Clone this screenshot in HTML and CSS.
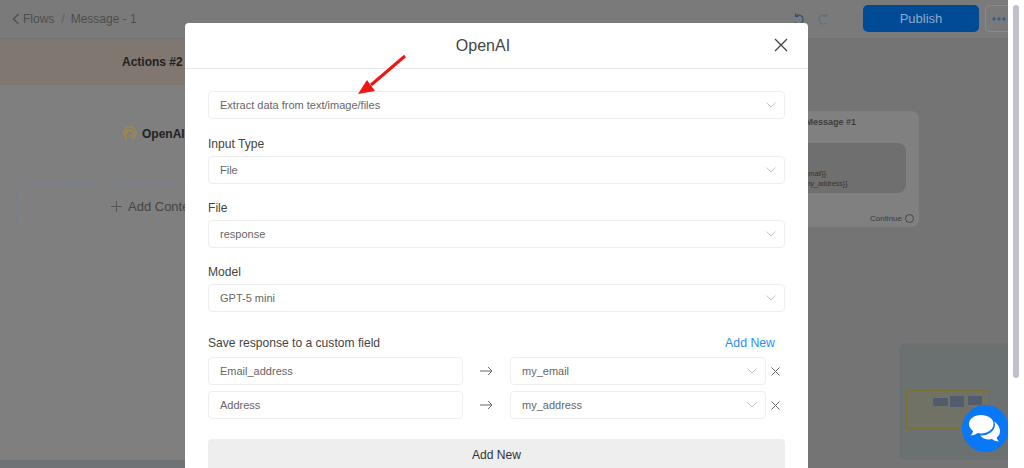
FILE: index.html
```html
<!DOCTYPE html>
<html lang="en">
<head>
    <meta charset="UTF-8">
    <title>OpenAI - Message 1</title>
    <link rel="stylesheet" href="styles.css">
</head>
<body>
    <div class="page">
        <div class="topbar">
            <div class="crumbs">
                <svg class="back" width="8" height="12" viewBox="0 0 8 12"><path d="M6.500 1 1.500 6l5 5" fill="none" stroke="currentColor" stroke-width="1.300"/></svg>
                <span>Flows</span><span class="sep">/</span><span>Message - 1</span>
            </div>
            <div class="top-actions">
                <svg class="undo" width="12" height="12" viewBox="0 0 14 14"><path d="M3 3.800a5.200 5.200 0 1 1-.5 7M3 .5v3.500h3.500" fill="none" stroke="#2a5480" stroke-width="1.400"/></svg>
                <svg class="redo" width="12" height="12" viewBox="0 0 14 14"><path d="M11 3.800a5.200 5.200 0 1 0 .5 7M11 .5v3.500H7.500" fill="none" stroke="#5f6f7c" stroke-width="1.400"/></svg>
                <div class="publish">Publish</div>
                <div class="more">
                    <svg width="14" height="4" viewBox="0 0 14 4"><circle cx="2" cy="2" r="1.700"/><circle cx="7" cy="2" r="1.700"/><circle cx="12" cy="2" r="1.700"/></svg>
                </div>
            </div>
        </div>

        <div class="canvas">
            <div class="actions-node">
                <div class="actions-head">Actions #2</div>
                <div class="openai-row">
                    <svg width="14" height="15" viewBox="0 0 14 15"><path d="M3.500 14V11.500C1.500 10 1 8 1 6.500 1 3 4 1 7 1s6 2 6 5.500c0 2.500-1.500 4-2.500 5.500L10 14M3.500 8C3 5.500 5 4 7 4c2.500 0 3.500 1.500 3.500 3.500S8.500 10.500 6.500 10" fill="none" stroke="#a88a3c" stroke-width="1.400"/></svg>
                    <span>OpenAI</span>
                </div>
                <div class="add-content">
                    <svg width="11" height="11" viewBox="0 0 11 11"><path d="M5.500 0v11M0 5.500h11" fill="none" stroke="#555"/></svg>
                    <span>Add Content</span>
                </div>
                <div class="bottom-band"></div>
            </div>

            <div class="message-node">
                <div class="message-title">Send Message #1</div>
                <div class="message-bubble">
                    <span>{{email}}</span>
                    <span>{{my_address}}</span>
                </div>
                <div class="continue">Continue <i class="port"></i></div>
            </div>

            <div class="minimap">
                <div class="mini-frame">
                    <i class="mini-a"></i><i class="mini-b"></i><i class="mini-c"></i>
                </div>
            </div>
        </div>
    </div>

    <div class="modal">
        <div class="modal-head">
            <span>OpenAI</span>
            <svg class="modal-close" width="14" height="14" viewBox="0 0 14 14"><path d="M1 1l12 12M13 1 1 13" fill="none" stroke="#444" stroke-width="1.300"/></svg>
        </div>
        <div class="modal-body">
            <div class="select first">Extract data from text/image/files<svg class="chev" width="10" height="6" viewBox="0 0 10 6"><path d="M.5.500 5 5 9.500.500" fill="none" stroke="#c4c4c4"/></svg></div>

            <label>Input Type</label>
            <div class="select">File<svg class="chev" width="10" height="6" viewBox="0 0 10 6"><path d="M.5.500 5 5 9.500.500" fill="none" stroke="#c4c4c4"/></svg></div>

            <label>File</label>
            <div class="select">response<svg class="chev" width="10" height="6" viewBox="0 0 10 6"><path d="M.5.500 5 5 9.500.500" fill="none" stroke="#c4c4c4"/></svg></div>

            <label>Model</label>
            <div class="select">GPT-5 mini<svg class="chev" width="10" height="6" viewBox="0 0 10 6"><path d="M.5.500 5 5 9.500.500" fill="none" stroke="#c4c4c4"/></svg></div>

            <div class="save-head">
                <span>Save response to a custom field</span>
                <a>Add New</a>
            </div>
            <div class="map-row">
                <div class="select field">Email_address</div>
                <svg class="arrow" width="13" height="10" viewBox="0 0 13 10"><path d="M0 5h12M8 1l4 4-4 4" fill="none" stroke="#666"/></svg>
                <div class="select field">my_email<svg class="chev" width="10" height="6" viewBox="0 0 10 6"><path d="M.5.500 5 5 9.500.500" fill="none" stroke="#c4c4c4"/></svg></div>
                <svg class="remove" width="9" height="9" viewBox="0 0 9 9"><path d="M.5.500l8 8M8.500.500l-8 8" fill="none" stroke="#666"/></svg>
            </div>
            <div class="map-row">
                <div class="select field">Address</div>
                <svg class="arrow" width="13" height="10" viewBox="0 0 13 10"><path d="M0 5h12M8 1l4 4-4 4" fill="none" stroke="#666"/></svg>
                <div class="select field">my_address<svg class="chev" width="10" height="6" viewBox="0 0 10 6"><path d="M.5.500 5 5 9.500.500" fill="none" stroke="#c4c4c4"/></svg></div>
                <svg class="remove" width="9" height="9" viewBox="0 0 9 9"><path d="M.5.500l8 8M8.500.500l-8 8" fill="none" stroke="#666"/></svg>
            </div>
            <div class="add-new">Add New</div>
        </div>
        <svg class="red-arrow" width="50" height="50" viewBox="0 0 50 50"><path d="M48 3 14 32" stroke="#f01414" stroke-width="3" fill="none"/><path d="M1 41 10 27 18 38z" fill="#f01414"/></svg>
    </div>

    <div class="chat-bubble">
        <svg width="38" height="34" viewBox="0 0 38 34">
            <path d="M14 3C7 3 2 7 2 12c0 3 2 5.500 4 7-.3 2-1.500 3.500-2.500 4.500 3 0 5.500-1 7-2.500 1 .2 2.500 .4 3.500 .4 7 0 12.500-4 12.500-9.400S21 3 14 3z" fill="#fff"/>
            <path d="M27 9.500c.6 1 1 2 1 3 0 6-6 11-14 11h-.8C15 26 18.500 27.500 22 27.500c1 0 2-.1 3-.4 1.500 1.500 4 2.500 7 2.500-1-1-2-2.500-2.300-4.100 2-1.500 3.300-3.500 3.300-6 0-4-2.500-8-6-10z" fill="#fff"/>
        </svg>
    </div>
    <div class="scrollbar"><div class="thumb"></div></div>
</body>
</html>
```

FILE: styles.css
```css
* {box-sizing: border-box}
html, body {margin: 0; height: 468px; overflow: hidden}
body {font-family: "Liberation Sans", Arial, sans-serif; background: #747474; position: relative; color: #333}

.page {width: 1008px; height: 468px; background: #747474; display: flex; flex-direction: column; position: relative; overflow: hidden}
.topbar {height: 39px; flex: none; background: #7a7a7a; border-bottom: 1px solid #727272; display: flex; justify-content: space-between; align-items: flex-start; padding: 5px 0 0 12px}
.crumbs {display: flex; align-items: center; gap: 6px; font-size: 12px; color: #4e4e4e; height: 27px}
.crumbs .back {margin-right: -3px}
.crumbs .sep {margin: 0 0 0 1px; color: #5e5e5e}
.top-actions {display: flex; align-items: center}
.undo {margin-right: 12px}
.redo {margin-right: 34px}
.publish {width: 116px; height: 27px; background: #004a96; border-radius: 5px; color: #8eaacb; font-size: 13px; display: flex; align-items: center; justify-content: center}
.more {width: 23px; height: 27px; margin-left: 6px; border: 1px solid #8a8a8a; border-right: 0; border-radius: 5px 0 0 5px; display: flex; align-items: center; padding-left: 6px; fill: #35608e}

.canvas {flex: 1; position: relative}
.actions-node {position: absolute; left: 0; top: 0; width: 340px; height: 429px; background: #7f7f7f; display: flex; flex-direction: column}
.actions-head {height: 46px; flex: none; background: #7f7770; font-size: 12px; font-weight: bold; color: #222; display: flex; align-items: center; padding-left: 122px}
.openai-row {display: flex; align-items: center; gap: 5px; margin: 41px 0 0 123px; font-size: 12px; font-weight: bold; color: #222}
.add-content {margin: 41px 0 0 16px; width: 300px; height: 48px; flex: none; border: 1px dashed #727f8a; border-radius: 6px; display: flex; align-items: center; padding-left: 94px; font-size: 13px; color: #444; gap: 6px}
.bottom-band {margin-top: auto; height: 8px; flex: none; background: #6f7375}

.message-node {position: absolute; left: 760px; top: 72px; width: 159px; height: 116px; background: #808080; border-radius: 8px}
.message-title {margin: 5px 0 0 0; font-size: 9px; font-weight: bold; color: #3d3d3d; padding-left: 21px; line-height: 13px; white-space: nowrap}
.message-bubble {position: absolute; left: 12px; top: 32px; width: 134px; height: 50px; background: #6f6f6f; border-radius: 8px; font-size: 7px; color: #333; display: flex; flex-direction: column; justify-content: flex-end; align-items: flex-start; padding: 0 0 4px 28px; line-height: 10px; white-space: nowrap}
.continue {position: absolute; right: 5px; bottom: 4px; font-size: 8px; color: #3d3d3d; display: flex; align-items: center; gap: 3px}
.port {width: 9px; height: 9px; border: 1px solid #444; border-radius: 50%}

.minimap {position: absolute; left: 899px; top: 304px; width: 120px; height: 117px; background: #6b7070; border: 1px solid #677382; border-radius: 7px}
.mini-frame {position: absolute; left: 6px; top: 46px; width: 84px; height: 39px; background: #6f7265; border: 1px solid #776f33; display: flex; align-items: flex-start; padding: 5px 0 0 26px}
.mini-a {width: 15px; height: 8px; margin-top: 2px; margin-right: 2px; background: #515c6e}
.mini-b {width: 14px; height: 11px; margin-right: 4px; background: #515c6e}
.mini-c {width: 14px; height: 9px; background: #515c6e}

.modal {position: absolute; left: 185px; top: 23px; width: 623px; height: 460px; background: #fff; border-radius: 4px 4px 0 0}
.modal-head {height: 46px; border-bottom: 1px solid #e4e8ee; display: flex; align-items: center; justify-content: center; font-size: 16px; color: #444; padding-right: 27px; position: relative}
.modal-close {position: absolute; right: 20px; top: 15px}
.modal-body {padding: 22px 23px 0; font-size: 12px}
.modal-body label {display: block; font-size: 12.100px; line-height: 14px; color: #444; margin: 17px 0 5px}
.select {height: 28px; border: 1px solid #eeeeee; border-radius: 4px; padding-left: 11px; display: flex; align-items: center; justify-content: space-between; font-size: 11px; color: #666; background: #fff}
.select.first {margin-bottom: 18px}
.chev {margin-right: 8px}
.save-head {display: flex; justify-content: space-between; margin: 24px 0 7px; font-size: 12.100px; line-height: 14px; color: #444; padding-right: 10px}
.save-head a {color: #2a90f0; font-size: 12.300px}
.map-row {display: flex; align-items: center; margin-bottom: 6px}
.field {width: 255px; flex: none}
.field + .arrow + .field {width: 256px}
.arrow {margin: 0 17px; flex: none}
.remove {margin-left: 5px; flex: none}
.add-new {margin-top: 20px; height: 40px; background: #eeeeee; border-radius: 4px; display: flex; align-items: center; justify-content: center; font-size: 12.100px; color: #333; padding-bottom: 9px}
.red-arrow {position: absolute; left: 172px; top: 30px}

.chat-bubble {position: absolute; left: 962px; top: 405px; width: 47px; height: 47px; border-radius: 50%; background: #0878f6; display: flex; align-items: center; justify-content: center}
.scrollbar {position: absolute; right: 0; top: 0; width: 16px; height: 468px; background: #fff}
.thumb {position: absolute; left: 5px; top: 5px; width: 6px; height: 373px; background: #c1c1c9; border-radius: 3px}
```
